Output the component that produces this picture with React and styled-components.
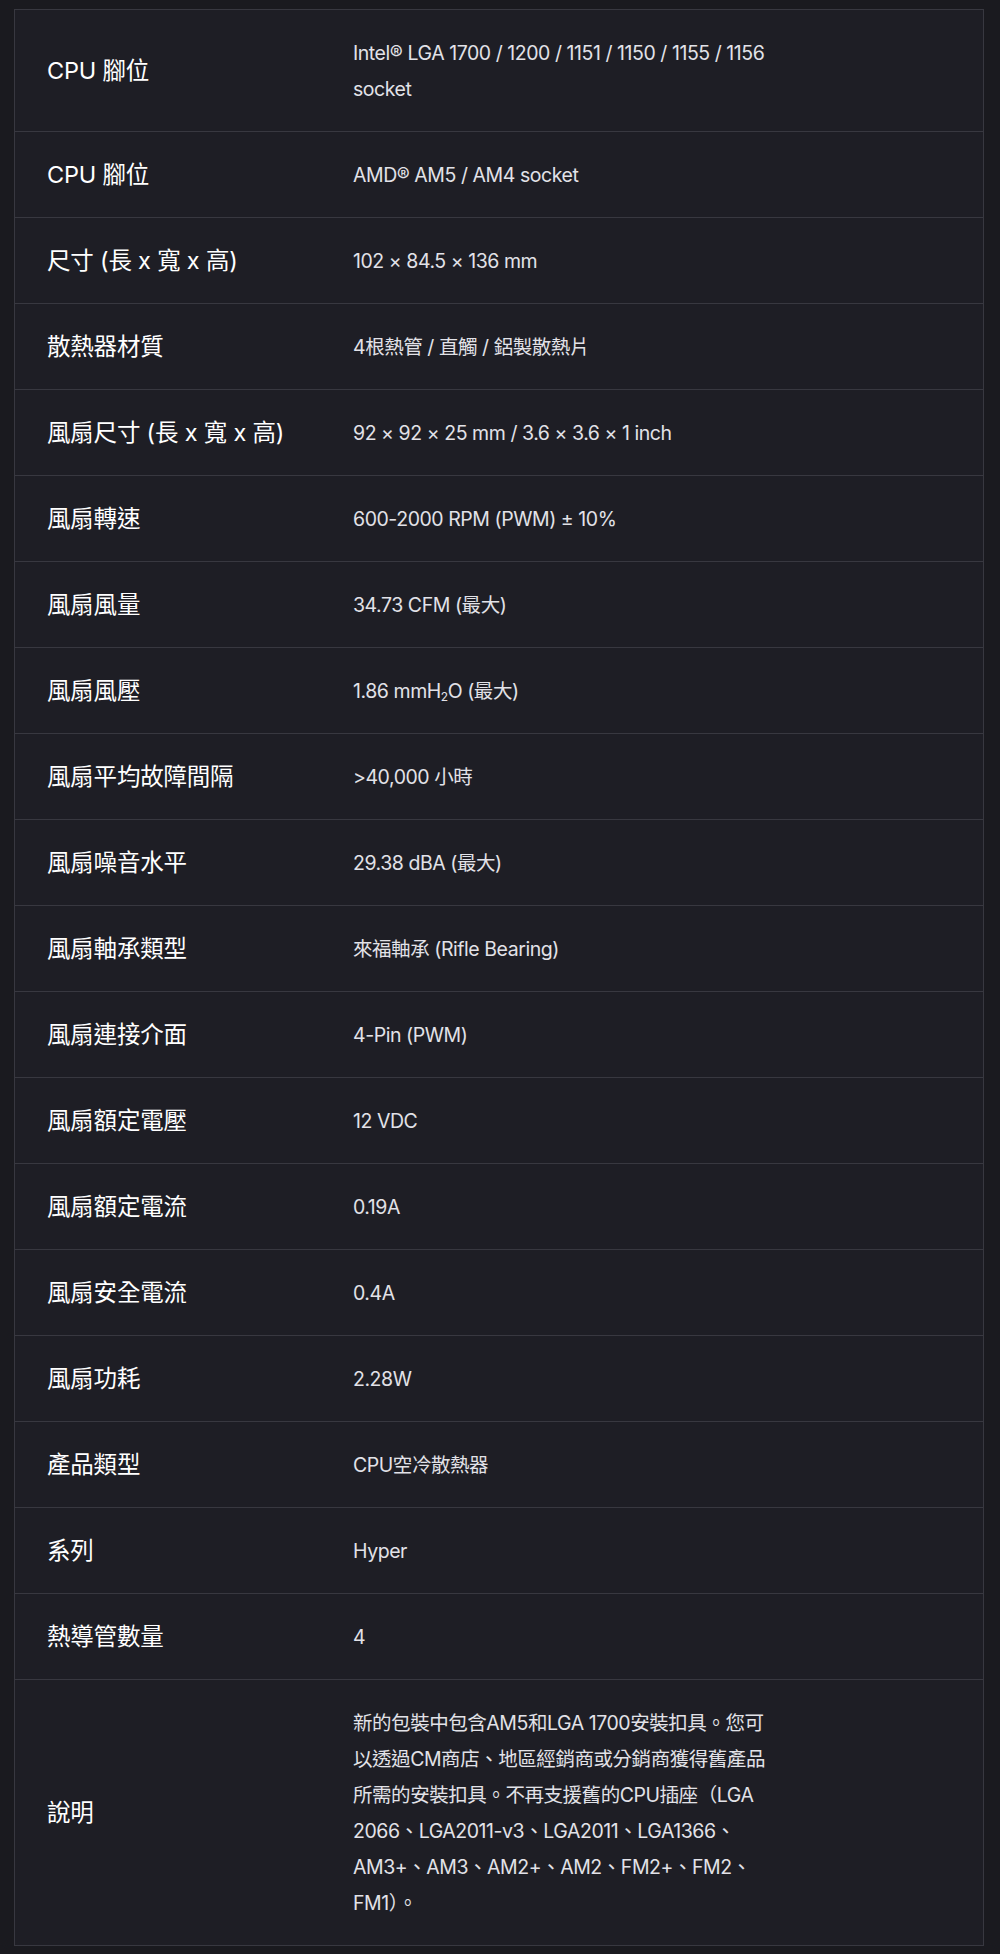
import React from "react";
import styled, { createGlobalStyle } from "styled-components";

const GlobalStyle = createGlobalStyle`
  html, body {
    margin: 0;
    padding: 0;
    background: #1a1a1f;
  }
  body {
    font-family: "Inter", "Noto Sans CJK TC", sans-serif;
    -webkit-font-smoothing: antialiased;
  }
`;

const Page = styled.div`
  padding: 9px 16px 9px 14px;
  min-height: 1954px;
  box-sizing: border-box;
`;

const Table = styled.div`
  border: 1px solid #383840;
  background: #1e1e25;
`;

const Row = styled.div`
  display: grid;
  grid-template-columns: 306px 1fr;
  align-items: center;
  border-top: 1px solid #383840;

  &:first-child {
    border-top: none;
  }
`;

const Label = styled.div`
  padding: 25px 0 24px 32px;
  font-size: 23.5px;
  font-weight: 400;
  line-height: 36px;
  color: #ffffff;
  letter-spacing: -0.2px;
`;

const Value = styled.div`
  padding: 25px 32px 24px 32px;
  font-size: 19.5px;
  line-height: 36px;
  color: #e2e2e8;
  letter-spacing: -0.45px;

  sub {
    font-size: 12px;
    line-height: 0;
    vertical-align: -3px;
  }
`;

const specs = [
  {
    label: "CPU 腳位",
    value: (
      <>
        Intel® LGA 1700 / 1200 / 1151 / 1150 / 1155 / 1156
        <br />
        socket
      </>
    ),
  },
  { label: "CPU 腳位", value: "AMD® AM5 / AM4 socket" },
  { label: "尺寸 (長 x 寬 x 高)", value: "102 × 84.5 × 136 mm" },
  { label: "散熱器材質", value: "4根熱管 / 直觸 / 鋁製散熱片" },
  { label: "風扇尺寸 (長 x 寬 x 高)", value: "92 × 92 × 25 mm / 3.6 × 3.6 × 1 inch" },
  { label: "風扇轉速", value: "600-2000 RPM (PWM) ± 10%" },
  { label: "風扇風量", value: "34.73 CFM (最大)" },
  {
    label: "風扇風壓",
    value: (
      <>
        1.86 mmH<sub>2</sub>O (最大)
      </>
    ),
  },
  { label: "風扇平均故障間隔", value: ">40,000 小時" },
  { label: "風扇噪音水平", value: "29.38 dBA (最大)" },
  { label: "風扇軸承類型", value: "來福軸承 (Rifle Bearing)" },
  { label: "風扇連接介面", value: "4-Pin (PWM)" },
  { label: "風扇額定電壓", value: "12 VDC" },
  { label: "風扇額定電流", value: "0.19A" },
  { label: "風扇安全電流", value: "0.4A" },
  { label: "風扇功耗", value: "2.28W" },
  { label: "產品類型", value: "CPU空冷散熱器" },
  { label: "系列", value: "Hyper" },
  { label: "熱導管數量", value: "4" },
  {
    label: "說明",
    value: (
      <>
        新的包裝中包含AM5和LGA 1700安裝扣具。您可
        <br />
        以透過CM商店、地區經銷商或分銷商獲得舊產品
        <br />
        所需的安裝扣具。不再支援舊的CPU插座（LGA
        <br />
        2066、LGA2011-v3、LGA2011、LGA1366、
        <br />
        AM3+、AM3、AM2+、AM2、FM2+、FM2、
        <br />
        FM1）。
      </>
    ),
  },
];

export default function App() {
  return (
    <>
      <GlobalStyle />
      <Page>
        <Table>
          {specs.map((s, i) => (
            <Row key={i}>
              <Label>{s.label}</Label>
              <Value>{s.value}</Value>
            </Row>
          ))}
        </Table>
      </Page>
    </>
  );
}
